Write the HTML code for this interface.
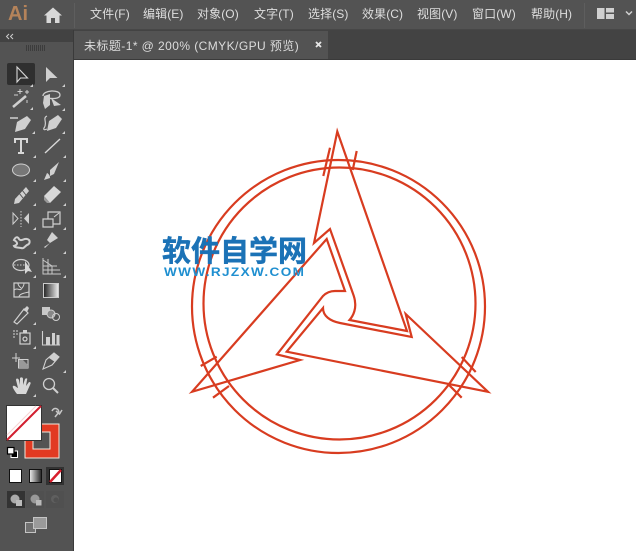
<!DOCTYPE html>
<html><head><meta charset="utf-8">
<style>
html,body{margin:0;padding:0;width:636px;height:551px;overflow:hidden;background:#fff}
body{position:relative;font-family:"Liberation Sans","Noto Sans CJK SC",sans-serif}
.a{position:absolute}
.m{position:absolute;top:6px;font-size:12px;line-height:16px;color:#dedede;white-space:nowrap;letter-spacing:.1px}
#wm{position:absolute;left:162px;top:232px;font:bold 29px/34px "Noto Sans CJK SC",sans-serif;color:#1b72b6;white-space:nowrap;letter-spacing:0;-webkit-text-stroke:.5px #1b72b6}
#wu{position:absolute;left:164px;top:267px;font:bold 11.5px/13px "Liberation Sans",sans-serif;color:#1f8fd0;letter-spacing:1.15px;white-space:nowrap;transform:scaleX(1.18);transform-origin:0 0}
</style></head><body>
<div class="a" style="left:0;top:0;width:636px;height:30px;background:#535353"></div>
<div class="a" style="left:0;top:29px;width:636px;height:1px;background:#474747"></div>
<div class="a" style="left:74px;top:30px;width:562px;height:30px;background:#434343"></div>
<div class="a" style="left:74px;top:31px;width:254px;height:29px;background:#535353"></div>
<div class="a" style="left:0;top:30px;width:73px;height:521px;background:#535353"></div>
<div class="a" style="left:0;top:30px;width:73px;height:12px;background:#424242"></div>
<div class="a" style="left:73px;top:30px;width:1px;height:521px;background:#3a3a3a"></div>
<div class="a" style="left:74px;top:59px;width:562px;height:1px;background:#3a3a3a"></div>
<div class="a" style="left:74px;top:60px;width:562px;height:491px;background:#fff"></div>

<div class="a" style="left:8px;top:0px;font:bold 20px/28px 'Liberation Sans',sans-serif;color:#b5835a;letter-spacing:0">Ai</div>
<svg class="a" style="left:43px;top:7px" width="20" height="17" viewBox="0 0 20 17"><path d="M10 0.5L19 8.5H16.5V16H12V11H8V16H3.5V8.5H1Z" fill="#d8d8d8"/></svg>
<div class="a" style="left:74px;top:3px;width:1px;height:25px;background:#5e5e5e"></div>
<div class="m" style="left:90px">文件(F)</div>
<div class="m" style="left:143px">编辑(E)</div>
<div class="m" style="left:197px">对象(O)</div>
<div class="m" style="left:254px">文字(T)</div>
<div class="m" style="left:308px">选择(S)</div>
<div class="m" style="left:362px">效果(C)</div>
<div class="m" style="left:417px">视图(V)</div>
<div class="m" style="left:472px">窗口(W)</div>
<div class="m" style="left:531px">帮助(H)</div>
<div class="a" style="left:584px;top:3px;width:1px;height:25px;background:#5e5e5e"></div>
<svg class="a" style="left:597px;top:8px" width="36" height="12" viewBox="0 0 36 12"><path d="M0 0H7.5V11H0ZM9 0H17V4.5H9ZM9 6H17V11H9Z" fill="#d0d0d0"/><path d="M29 3.5L32 6.5L35 3.5" fill="none" stroke="#d0d0d0" stroke-width="1.5"/></svg>

<div class="m" style="left:84px;top:38px;letter-spacing:.43px;color:#dcdcdc">未标题-1* @ 200% (CMYK/GPU 预览)</div>
<svg class="a" style="left:315px;top:41px" width="7" height="7" viewBox="0 0 7 7"><path d="M1 1L6 6M6 1L1 6" stroke="#e6e6e6" stroke-width="1.8"/></svg>

<svg class="a" style="left:0;top:30px" width="73" height="521" viewBox="0 30 73 521" fill="none">
<path d="M9 34L6.500 36.500L9 39M13 34L10.500 36.500L13 39" stroke="#ccc" stroke-width="1"/>
<path d="M26.500 45V51M28.500 45V51M30.500 45V51M32.500 45V51M34.500 45V51M36.500 45V51M38.500 45V51M40.500 45V51M42.500 45V51M44.500 45V51" stroke="#3c3c3c" stroke-width="1"/>
<rect x="7" y="63" width="28" height="22" rx="2" fill="#2f2f2f"/>
<path d="M17 67V82L20.500 78H27.500Z" stroke="#d8d8d8" stroke-width="1.100"/>
<path d="M46 67V82L50 78H57.500Z" fill="#cfcfcf"/>
<path d="M13 107L26 96" stroke="#cfcfcf" stroke-width="2.500"/><path d="M20 89V94M17.500 91.500H22.500M27 90V94M25 92H29M14 95H18M27 100V103" stroke="#cfcfcf" stroke-width="1"/>
<path d="M43 96C43 90 60 89 60 95C60 99 52 99 48 98" stroke="#cfcfcf" stroke-width="1.300"/><path d="M44 96L50 94V105L45 109L43 103ZM51 98L61 105L54 106Z" fill="#cfcfcf"/>
<path d="M17 122L27 116L31 120L25 129L15 132Z" fill="#d0d0d0"/><path d="M10 118H18" stroke="#d0d0d0" stroke-width="1.500"/>
<path d="M49 121L58 115L62 119L56 128L47 131Z" fill="#d0d0d0"/><path d="M47 116C42 118 48 123 44 128C43 130 45 130 47 129" stroke="#d0d0d0" stroke-width="1.200"/>
<path d="M15 143V139H27V143M21 139V153M18 153H24" stroke="#d8d8d8" stroke-width="2"/>
<path d="M45 153L60 139" stroke="#d8d8d8" stroke-width="1.400"/>
<ellipse cx="21" cy="170" rx="8.500" ry="6" fill="#777" stroke="#d0d0d0" stroke-width="1"/>
<path d="M50 170L59 162L54 174L50 176Z" fill="#d0d0d0"/><path d="M47 173C49 174 50 176 50 178L44 180Z" fill="#d0d0d0"/>
<path d="M15 199L26 187L29 191L19 203L14 204Z" fill="#d0d0d0"/><path d="M19 193L23 198M22 190L26 195" stroke="#535353" stroke-width="1"/>
<path d="M44 196L54 186L61 192L50 203Z" fill="#d8d8d8" /><path d="M44 196L50 203L47 203L44 200Z" fill="#999"/>
<path d="M13 213V224L18 218.500Z" stroke="#d0d0d0" stroke-width="1"/><path d="M29 213V224L24 218.500Z" fill="#d0d0d0"/><path d="M21 211V227" stroke="#d0d0d0" stroke-width="1" stroke-dasharray="1.500 1.500"/>
<path d="M43 219H53V227H43ZM48 219V212H60V224H53" stroke="#d0d0d0" stroke-width="1.200"/><path d="M54 217L59 213" stroke="#d0d0d0" stroke-width="1"/>
<path d="M14 240C16 236 18 237 19 239C21 242 24 238 27 239C31 240 30 244 27 245C24 247 24 249 21 248C17 247 15 248 14 246C17 245 19 243 14 240Z" stroke="#d0d0d0" stroke-width="2"/>
<path d="M50 243L45 248L44 247ZM47 240L52 232L58 238L50 243Z" fill="#d0d0d0"/>
<ellipse cx="21" cy="265" rx="8" ry="5.500" stroke="#d0d0d0" stroke-width="1.200"/><path d="M14 265H25" stroke="#d0d0d0" stroke-dasharray="1.500 1.500"/><path d="M25 261V274L28 271L32 272Z" fill="#d8d8d8"/>
<path d="M43 258V274H61M43 260L52 266V274M48 259V274M43 266H57M43 270H60" stroke="#c8c8c8" stroke-width="1"/>
<rect x="14" y="283" width="15" height="14" stroke="#d0d0d0" stroke-width="1.200"/><path d="M14 290C18 287 20 292 22 288C24 286 24 284 24 283M19 297C19 294 24 293 29 292M18 283C18 286 20 287 21 288" stroke="#d0d0d0" stroke-width="1"/>
<defs><linearGradient id="g" x1="0" x2="1" y1="0" y2="0"><stop offset="0" stop-color="#222"/><stop offset="1" stop-color="#eee"/></linearGradient></defs>
<rect x="43.500" y="283.500" width="15" height="14" fill="url(#g)" stroke="#ccc" stroke-width="1"/>
<path d="M14 322L24 309L28 313L17 324Z" stroke="#d0d0d0" stroke-width="1.200"/><path d="M23 310L27 306L29 308L27 312Z" fill="#d0d0d0"/>
<rect x="42" y="307" width="8" height="8" fill="#c8c8c8"/><circle cx="51" cy="314" r="4" fill="#888" stroke="#d0d0d0"/><circle cx="56" cy="317" r="3.500" stroke="#d0d0d0"/>
<path d="M13 331H15M16 331H18M13 334H15M16 334H18M13 337H15" stroke="#aaa" stroke-width="1.500"/><rect x="20" y="333" width="10" height="11" stroke="#d0d0d0" stroke-width="1.200"/><circle cx="25" cy="339" r="2" stroke="#d0d0d0" stroke-width="1.200"/><path d="M23 330H27V333H23Z" fill="#d0d0d0"/>
<path d="M42.500 331V345H60" stroke="#d0d0d0" stroke-width="1.100"/><path d="M46 337H50V345H46ZM52 333H55V345H52ZM56.500 335H59.500V345H56.500Z" fill="#d0d0d0"/>
<path d="M12 358H20M16 353V362" stroke="#d0d0d0" stroke-width="1"/><path d="M18.500 359.500H28V368H18.500Z" stroke="#d0d0d0" stroke-width="1"/><path d="M19 360H23L28 365V368H19Z" fill="#999"/>
<path d="M43 369L46 360L54 353L59 357L52 365Z" stroke="#d0d0d0" stroke-width="1.100"/><path d="M49 358L54 353L59 357L55 362Z" fill="#d0d0d0"/>
<path d="M17 394C14 390 12 387 13 386C15 385 17 388 18 388L16 380C16 378 18 378 19 380L20 385V378C21 377 23 377 23 379V385L25 379C26 378 28 378 27 380L26 386L29 382C31 382 31 383 30 385L26 394Z" fill="#d8d8d8"/>
<circle cx="49" cy="384" r="5.500" stroke="#cfcfcf" stroke-width="1.300"/><path d="M53 388L58 393" stroke="#cfcfcf" stroke-width="2"/>
<g fill="#cfcfcf"><path d="M30 87h3v-3zM62 87h3v-3zM30 110h3v-3zM62 111h3v-3zM32 134h3v-3zM62 134h3v-3zM33 158h3v-3zM63 158h3v-3zM33 182h3v-3zM63 182h3v-3zM33 206h3v-3zM63 206h3v-3zM33 230h3v-3zM63 230h3v-3zM33 254h3v-3zM63 254h3v-3zM33 278h3v-3zM63 278h3v-3zM33 325h3v-3zM33 349h3v-3zM63 373h3v-3zM33 397h3v-3z"/></g>

<path d="M52 411C54 407 58 408 59 412M56 411L59.500 414L62 410M59 412L55 417" stroke="#c8c8c8" stroke-width="1.500"/>
<rect x="25" y="424" width="34" height="34" fill="#e23a22" stroke="#f2e8dc" stroke-width="1"/>
<rect x="33" y="432" width="17" height="17" fill="#535353" stroke="#f2e8dc" stroke-width="1"/>
<rect x="6.500" y="405.500" width="35" height="35" fill="#fff" stroke="#333" stroke-width="1"/>
<path d="M7 440L41 406" stroke="#d22030" stroke-width="2"/>
<path d="M7 435L36 406" stroke="#f6d4d4" stroke-width="1"/>
<rect x="11" y="451" width="6.500" height="6.500" fill="#000" stroke="#fff" stroke-width="1"/>
<rect x="7.500" y="447.500" width="6.500" height="6.500" fill="#fff" stroke="#000" stroke-width="1.200"/>
<rect x="9.500" y="469.500" width="12" height="13" fill="#fff" stroke="#111"/>
<defs><linearGradient id="g2" x1="0" x2="1" y1="0" y2="0"><stop offset="0" stop-color="#eee"/><stop offset="1" stop-color="#222"/></linearGradient></defs>
<rect x="29.500" y="469.500" width="12" height="13" fill="url(#g2)" stroke="#111"/>
<rect x="46" y="467" width="18" height="18" fill="#323232"/>
<rect x="49.500" y="469.500" width="12" height="13" fill="#fff" stroke="#111"/>
<path d="M50 482L61 470" stroke="#d81e2c" stroke-width="2.500"/>
<rect x="7" y="491" width="18" height="17" fill="#333"/>
<rect x="26" y="491" width="18" height="17" fill="#505050"/>
<rect x="46" y="491" width="18" height="17" fill="#505050"/>
<circle cx="15" cy="499" r="4.500" fill="#aaa"/><rect x="16" y="500" width="6" height="6" fill="#bbb"/>
<circle cx="35" cy="499" r="4.500" fill="#999"/><rect x="36" y="500" width="5.500" height="5.500" fill="#bbb"/>
<circle cx="55" cy="499" r="4" fill="#5f5f5f"/><circle cx="56" cy="500" r="2.500" fill="#505050"/>
<rect x="25.500" y="522.500" width="10" height="10" fill="#707070" stroke="#c4c4c4"/>
<rect x="33.500" y="517.500" width="13" height="11" fill="#9a9a9a" stroke="#c4c4c4"/>
</svg>

<svg class="a" style="left:0;top:0" width="636" height="551" fill="none" stroke="#d83c20" stroke-width="2.200" stroke-linejoin="miter" stroke-miterlimit="8">
<circle cx="338.500" cy="306.500" r="146.500"/>
<circle cx="339.500" cy="303.500" r="136"/>
<path d="M337.300 131.500L407 331L349.500 320C354 315 356 308 355 302C355 298 353 294 351.700 290L330 229L314 243Z"/>
<path d="M323 308C323 316 330 321 340 323L411.700 337L405.700 314L488 391.800L286.700 351.700Z"/>
<path d="M192 391.800L326.700 239L345 291L335 291C330 291 326 293 323 296L277 354.500L300 360Z"/>
<path d="M323.300 176L330 147.700M352.700 170L356.700 151M200.700 366L216.700 356.700M213 397.700L229 386M461.700 357L475.700 372M448 384L461.700 397.700"/>
</svg>

<div id="wm">软件自学网</div>
<div id="wu">WWW.RJZXW.COM</div>
</body></html>
